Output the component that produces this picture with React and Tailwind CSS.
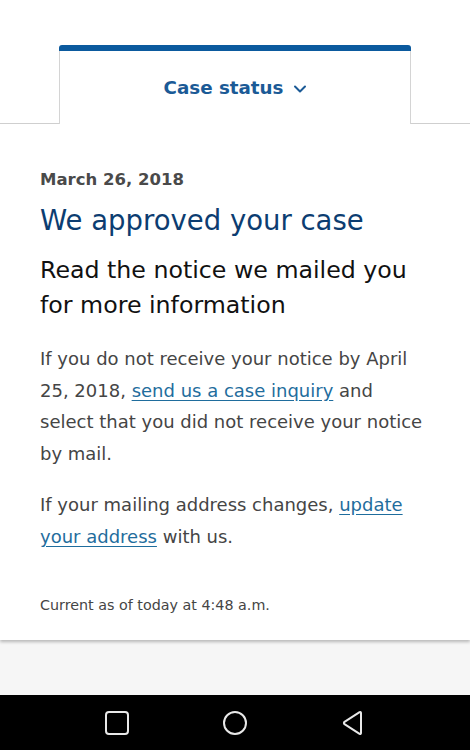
import React from 'react';

function NavBar() {
  return (
    <div className="h-[55px] bg-black flex items-center justify-around px-[58px]">
      <svg width="26" height="26" viewBox="0 0 26 26" fill="none">
        <rect x="2" y="2" width="22" height="22" rx="3" stroke="#e8e8e8" strokeWidth="2" />
      </svg>
      <svg width="26" height="26" viewBox="0 0 26 26" fill="none">
        <circle cx="13" cy="13" r="11" stroke="#e8e8e8" strokeWidth="2" />
      </svg>
      <svg width="26" height="26" viewBox="0 0 26 26" fill="none">
        <path d="M21 3 L21 23 Q21 24.5 19.6 23.8 L4.5 14.2 Q3.3 13 4.5 11.8 L19.6 2.2 Q21 1.5 21 3 Z" stroke="#e8e8e8" strokeWidth="2" strokeLinejoin="round" />
      </svg>
    </div>
  );
}

export default function App() {
  return (
    <div className="h-[750px] flex flex-col bg-[#f6f6f6] font-['DejaVu_Sans',sans-serif]">
      <div className="bg-white pt-[45px] shadow-[0_2px_3px_rgba(0,0,0,0.25)]">
        <div className="flex">
          <div className="flex-1 border-b border-[#cfcfcf]" />
          <div className="w-[352px]">
            <div className="h-[6px] bg-[#0b5a9e] rounded-t-[3px]" />
            <div className="h-[73px] border-x border-[#d4d4d4] flex items-center justify-center gap-[9px] pt-[1px]">
              <span className="text-[18.3px] font-bold text-[#1b5a96]">Case status</span>
              <svg width="14" height="10" viewBox="0 0 14 10" fill="none" className="mt-[1px]">
                <path d="M2 2.5 L7 7.5 L12 2.5" stroke="#1b5a96" strokeWidth="2" strokeLinecap="round" strokeLinejoin="round" />
              </svg>
            </div>
          </div>
          <div className="flex-1 border-b border-[#cfcfcf]" />
        </div>

        <div className="px-10 pt-[44px] pb-[25px]">
          <p className="text-[16.5px] leading-[24px] font-bold text-[#4a4a4a]">March 26, 2018</p>
          <h1 className="mt-[10px] text-[27.5px] leading-[36px] text-[#0c3d71]">We approved your case</h1>
          <h2 className="mt-[15px] text-[23.7px] leading-[35px] text-[#111]">
            Read the notice we mailed you for more information
          </h2>
          <p className="mt-[20px] text-[18px] leading-[31.7px] text-[#454545]">
            If you do not receive your notice by April 25, 2018,{' '}
            <a href="#" className="text-[#1f6d9d] underline underline-offset-[3px]">send us a case inquiry</a>{' '}
            and select that you did not receive your notice by mail.
          </p>
          <p className="mt-[19px] text-[18px] leading-[31.7px] text-[#454545]">
            If your mailing address changes,{' '}
            <a href="#" className="text-[#1f6d9d] underline underline-offset-[3px]">update your address</a>{' '}
            with us.
          </p>
          <p className="mt-[43px] text-[14.3px] leading-[20px] text-[#454545]">Current as of today at 4:48 a.m.</p>
        </div>
      </div>
      <div className="flex-1" />
      <NavBar />
    </div>
  );
}
